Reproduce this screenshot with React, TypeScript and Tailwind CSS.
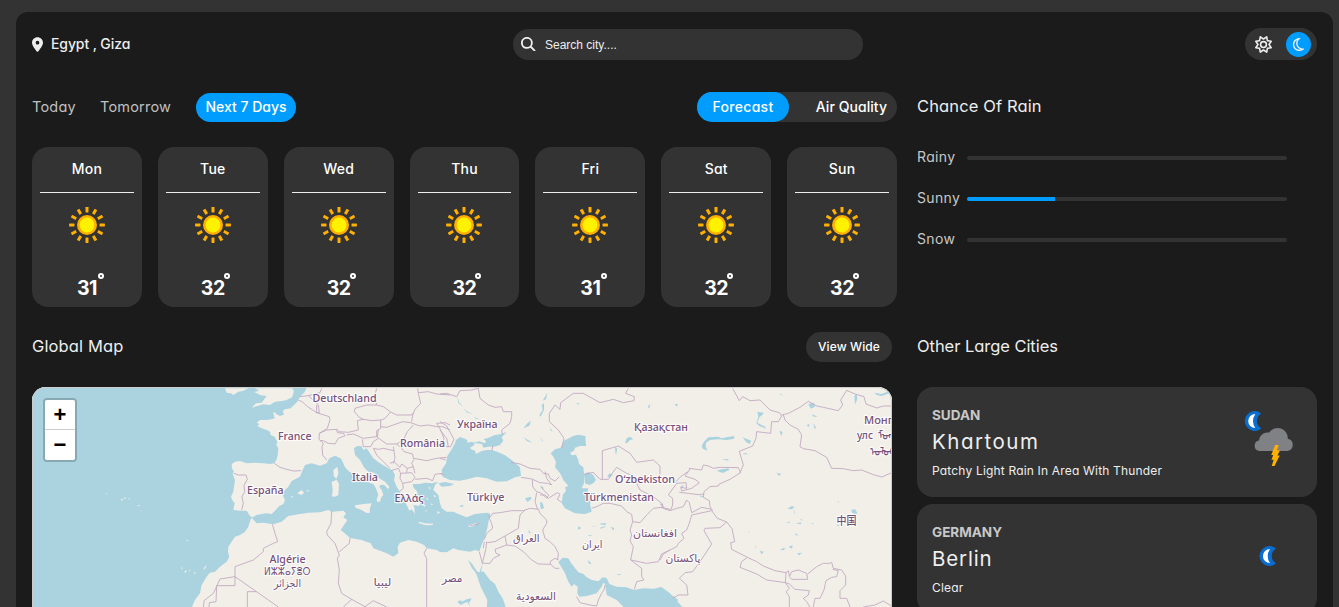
import { FaLocationDot, FaMagnifyingGlass, FaRegMoon, FaRegSun } from "react-icons/fa6";

const BODY = "font-['Inter',sans-serif] [font-feature-settings:'cv11']";

const days = [
  { day: "Mon", temp: 31 },
  { day: "Tue", temp: 32 },
  { day: "Wed", temp: 32 },
  { day: "Thu", temp: 32 },
  { day: "Fri", temp: 31 },
  { day: "Sat", temp: 32 },
  { day: "Sun", temp: 32 },
];

const chances = [
  { label: "Rainy", value: 0 },
  { label: "Sunny", value: 27.5 },
  { label: "Snow", value: 0 },
];

function SunIcon() {
  return (
    <svg viewBox="-18 -18 36 36" className="size-9">
      {Array.from({ length: 12 }, (_, i) => (
        <rect key={i} x="-1.5" y="-17.9" width="3" height="5.4" rx="0.4" fill="#ffb000" transform={`rotate(${i * 30})`} />
      ))}
      <circle r="10" fill="#ffae00" />
      <circle r="7.4" fill="#fff200" />
    </svg>
  );
}

function MoonShape() {
  return (
    <>
      <path d="M15.4 2.6A9.5 9.5 0 1 0 15.4 17.4 8.6 8.6 0 0 1 15.4 2.6Z" fill="#0a6ed1" stroke="#0a6ed1" strokeWidth="1" strokeLinejoin="round" />
      <path d="M10 2.9A7.1 7.1 0 0 0 10 17.1 13 13 0 0 1 10 2.9Z" fill="#fff" />
    </>
  );
}

function MoonIcon() {
  return (
    <svg viewBox="0 0 64 64" className="mb-[6px] size-16">
      <g transform="translate(23 22)">
        <MoonShape />
      </g>
    </svg>
  );
}

function ThunderIcon() {
  return (
    <svg viewBox="0 0 64 64" className="mb-[6px] size-16">
      <g transform="translate(8.3 4)">
        <MoonShape />
      </g>
      <path d="M22.4 44a5.3 5.3 0 0 1-.5-10.5 8.4 8.4 0 0 1 10.2-7.9 10.1 10.1 0 0 1 18.6 6.2 6.2 6.2 0 0 1-.3 12.2Z" transform="translate(.1 0)" fill="#808184" />
      <path d="M38.2 38h3.6l-2 5.3h3.1l-2.5 5.2h2.3l-5.2 10.4h-2.8l2-6.2h-2.3l1.9-4.8h-2.1Z" fill="#ffb000" />
    </svg>
  );
}

const SEAS_WEST = [
  // Atlantic
  "M-580 10H265L255 35 240 50 232 65 222 75 212 85 195 88 188 93 192 104 180 108 170 103 162 95 160 99 164 115 155 118 140 120 120 120 110 128 118 132 112 138 125 145 140 150 150 155 152 165 164 170 172 185 169 196 175 204 173 225 170 238 163 250 150 252 130 250 105 248 80 250 60 243 45 245 35 253 36 265 42 275 38 282 45 300 42 320 40 335 33 350 38 362 44 370 40 390 60 392 80 392 88 405 97 413 92 418 85 440 75 455 60 465 45 470 35 485 25 500 24 515 28 530 20 545 0 560-15 575-30 578-40 590-55 615-60 640-75 660-88 690H-580Z",
  // Mediterranean
  "M95 413 110 405 125 402 140 400 155 402 165 392 178 378 190 372 195 360 188 345 190 335 205 320 215 303 240 290 247 272 255 255 275 250 300 257 320 250 328 235 345 227 362 235 368 245 375 262 388 275 405 283 425 298 440 300 448 308 460 312 468 325 475 345 470 358 472 366 480 365 484 352 490 345 485 330 478 322 480 315 492 314 505 328 508 320 495 305 470 290 463 278 445 275 432 262 420 240 405 225 402 205 412 198 425 199 430 210 440 205 450 220 460 235 480 250 500 262 518 272 525 285 522 300 530 320 540 335 552 355 560 375 568 392 575 388 585 402 583 385 580 375 598 378 600 370 595 350 588 345 592 335 580 322 578 312 600 312 615 308 635 310 655 305 645 315 640 330 655 345 660 370 665 385 680 395 700 395 715 402 740 412 765 402 785 400 805 398 808 410 803 440 795 470 785 495 778 514 765 510 750 515 715 510 700 505 680 517 660 516 650 510 620 505 612 495 590 485 565 480 540 488 533 500 535 520 520 530 500 520 480 512 460 505 452 490 425 480 390 474 380 465 362 450 372 435 382 420 370 412 378 400 370 392 335 395 325 390 300 397 265 398 235 403 205 408 185 425 160 433 130 428 110 430Z",
];

const ISLANDS = [
  "M15 25H85L70 32 55 35 40 45 33 40 20 38Z",
  "M105 25H217L222 34 216 52 200 60 190 62 165 65 150 75 130 73 95 83 108 70 125 68 137 52 140 48 122 46 103 36 118 32Z",
  "M405 376 430 372 455 370 449 386 450 398 440 399 420 388 406 383Z",
  "M335 306 350 299 357 312 355 345 345 350 336 349 338 330Z",
  "M340 270 352 260 355 280 349 297 341 288Z",
  "M595 425 615 430 640 431 638 435 618 436 597 430Z",
  "M745 437 758 432 770 430 762 438 750 441Z",
  "M232 340 245 330 252 338 245 345Z",
  "M258 332 266 330 265 335Z",
  "M212 350 218 348 218 353Z",
  "M602 365 618 377 612 380ZM625 320 633 324 628 328ZM640 345 650 348 643 352ZM620 352 625 358 620 360ZM632 370 640 374 634 376ZM653 392 660 398 652 402ZM618 390 622 394 616 394Z",
  "M-300 358h10l-3 4ZM-290 354l8-2-3 5ZM-275 355l6 1-4 3ZM-248 375l12 1-10 2ZM-342 339h3v2h-3ZM-238 392h3v2h-3ZM-102 481l9-1-6 4Z",
  "M-116 560l4 5-3 4ZM-108 575l9-5-4 9ZM-95 572l9-4-6 6ZM-78 576l6 4-6 2ZM-50 572l4-12 6-5-4 10Z",
];

const SEAS_EAST = [
  // Black Sea and Azov
  "M48 180 60 171 75 176 82 180 82 188 96 185 105 190 100 197 90 203 94 208 105 212 108 222 125 213 140 210 155 210 175 217 195 226 215 240 240 262 243 288 225 292 200 304 170 305 140 295 110 290 85 297 60 302 30 300 8 290 5 270 18 250 22 228 35 208 45 190Z",
  "M100 188 118 184 135 190 138 183 130 178 150 172 162 166 180 163 200 156 185 172 190 182 180 195 162 200 145 200 130 203 126 192Z",
  "M-5 310 15 306 42 312 30 318 5 320Z",
  // Caspian
  "M372 182 400 168 415 164 436 168 438 198 420 198 405 203 402 212 390 219 395 226 408 224 415 240 417 252 430 262 432 280 432 310 425 325 445 325 443 335 456 352 450 372 455 395 435 402 405 400 375 385 365 370 368 345 378 332 375 322 385 318 370 300 360 280 345 262 348 245 340 230 332 220 345 208 362 203Z",
  "M432 283 445 276 460 285 468 300 460 310 448 315 435 310Z",
  // Persian Gulf and Gulf of Oman
  "M355 546 368 533 385 535 393 548 402 560 415 577 430 582 440 592 455 600 475 604 488 592 500 594 508 612 530 620 560 622 582 630 610 625 640 626 665 622 690 640 710 662 735 690H560L530 660 500 645 495 612 490 608 485 620 470 640 440 648 418 650 412 640 413 620 402 612 395 620 385 605 375 580Z",
  // Red Sea
  "M108 578 130 574 150 600 165 612 175 635 188 655 200 690H140L142 660 122 620Z",
  "M84 540 95 550 105 565 115 578 110 582 96 565ZM128 550 126 562 122 578 119 574Z",
];

const LAKES_EAST = [
  "M52 50 58 68 70 80 55 70ZM70 85 85 97 100 103 82 98ZM100 110 120 118 108 116Z",
  "M250 145 262 130 273 122 268 137ZM250 172 278 188 262 184ZM298 105 308 90 305 75 312 70 312 90 302 110ZM308 62 322 38 318 58Z",
  "M525 200 532 206 528 226 526 215ZM502 290 508 280 518 284 510 292Z",
  "M555 190 560 175 570 170 580 178 570 180 562 188Z",
  "M255 355 272 350 275 356 262 366ZM300 365 308 370 312 385 302 388ZM305 318 312 325 306 327Z",
  "M415 440h6v8h-8ZM482 430h16v4h-16ZM480 443l16-5v3l-15 5ZM510 440l12 4v8ZM445 465h10v2h-10ZM443 540l12 10-8 2ZM532 582h14l-12 4ZM450 440l15-3v2Z",
  "M52 665 62 660 65 665 80 658 95 655 90 665 75 668 62 675ZM85 660l5 18-6-8Z",
  "M265 450l8 8-6 2ZM623 80l8-8-3 14ZM408 70h8v4ZM300 170l10 15-4-2ZM330 140l8 15-5-3ZM57 378l14-4-4 8Z",
];

const LAKES_FAR = [
  "M125 197 132 185 145 172 175 170 185 175 200 172 222 168 223 176 200 180 175 178 150 180 138 188 137 198 142 212 128 206Z",
  "M170 272 185 268 205 265 208 270 188 279ZM185 238 205 238 205 242ZM248 172 262 178 273 182 270 192 258 186Z",
  "M292 95 310 98 310 102 298 112 292 128 315 140 318 146 298 138 289 130 295 110Z",
  "M445 72 462 68 465 80 452 86ZM455 102l18 8-12 0ZM358 152l10 4-4 12ZM460 130l8 12-4 6ZM440 135l10-3-5 10Z",
  "M583 48 590 42 592 56 585 74ZM643 38 665 42 695 30 692 38 665 48 650 45Z",
  "M573 390 585 388 592 398 588 404 578 400ZM350 278l14 4-8 6ZM533 363l6 4h-6Z",
  "M382 386l14-8 8 4-10 6ZM408 430l16-3-2 6ZM405 460l12 6h-10ZM385 500 398 496 396 506ZM410 520l16-2-8 8ZM360 510l10-6 8 2-10 5ZM300 512l12 3-8 8ZM375 430l15-5v3ZM452 430h8v3ZM400 385l5 14-2 2ZM285 497l4 5h-4ZM262 455h6v3ZM420 415l8 6h-5Z",
  "M44 72h10l-4 8ZM120 346l12 4-10 2ZM250 220h12v3h-12ZM62 318l10-2-6 8ZM358 40l12 6-8-2ZM528 434h12l-5 5Z",
  "M-3 620 20 633 25 645 40 648 55 660 50 665 70 690H-3Z",
];

const BORDERS_WEST =
  "M163 250 180 262 200 268 220 273 243 272M42 280 55 285 78 285 82 298 72 315 74 335 66 350 70 370 65 390" +
  "M235 60 248 66 260 78 290 98 328 110 330 120 322 145 298 160 297 178 310 190 306 200 308 225 320 240" +
  "M240 50 265 47 282 62 295 75 298 98 290 98 290 75M265 47 300 38 305 25" +
  "M298 160 320 150 350 148 352 158 370 160 375 167 355 175 345 192 325 190 310 182 300 182" +
  "M350 148 358 155 385 157 415 150 412 122 430 118 455 122 482 120 482 145 470 152 470 170 430 175 400 162 380 165" +
  "M430 118 418 112 403 95 405 85 440 75 470 75 490 80 512 96 495 115 480 122M470 75 465 45 470 25" +
  "M512 96 530 105 575 105 580 98M593 25 595 40 602 70 585 88 578 105 575 125M482 140 500 142 520 135 548 125 572 128 600 138 625 135 650 140 668 140 690 150" +
  "M595 38 625 35 650 42 690 45M475 150 472 172 500 192 530 192 550 180 562 155 580 135" +
  "M530 192 545 205 552 215 578 222 580 235 620 242 650 235 680 232M650 130 662 150 672 175 668 195M650 130 675 128 690 135" +
  "M427 178 430 200 452 200 460 185 475 175M460 205 475 208 490 205 522 212 525 235 520 250M460 205 470 225 490 245 510 265" +
  "M522 212 520 200M510 250 522 245 540 262 545 252 562 265 580 260 575 250 582 238M513 272 535 265 542 280 575 278 585 292 575 305 548 310 540 295 542 280" +
  "M562 265 560 278M580 260 585 280M585 298 620 295 638 302 645 283 668 280M548 310 550 325 538 335" +
  "M335 393 333 430 320 455 322 465 345 490 358 525M390 474 388 490 370 505 358 515M358 525 352 535 358 570 355 610 365 640 395 658 370 681M395 658 435 680 460 662 500 681" +
  "M620 505 612 520 620 535 620 681M157 433 165 460 173 485 160 490 130 505 130 515 100 540 45 560 45 617-10 617-12 665-32 668-33 690" +
  "M45 590 175 681M82 681V635H110M45 590 0 597-20 640-48 662-50 690";

const BORDERS_EAST =
  "M0 42 20 40 50 50 60 32 95 30 115 25 120 55 145 75 165 82 185 80 190 95 215 95 215 110 210 130 185 150 187 162" +
  "M0 125 20 138 42 178 32 200 18 200M0 150 20 175 25 200M0 235 18 240M0 280 10 285" +
  "M365 205 372 175 355 150 328 125 328 100 345 75 360 88 362 68 400 40 430 40 480 68 520 58 550 68 582 62 583 50 557 40 565 25" +
  "M213 247 240 252 270 265 300 268 310 280 325 282 330 295 345 303 358 290M243 292 275 297 300 308 322 310 335 315 320 295 315 275" +
  "M277 298 278 320 290 335 305 340 320 355 326 345 310 330 302 318M290 338 285 365 293 388M300 345 315 345 325 355 352 338 360 343 352 358 365 367" +
  "M150 412 158 400 180 398 215 392 250 392 270 385 295 388M295 388 300 400 320 420 320 430 308 450 315 475 330 485 345 500 355 520 353 540" +
  "M255 390 240 405 235 445 195 468 165 485 140 488M195 468 200 495 225 498 250 515 275 540 295 552 332 553M332 553 330 545 345 535 355 540M332 553 345 565 358 565" +
  "M200 495 165 508 168 520 180 525 160 535 150 550 128 550M148 400 148 415 155 430 158 445 140 460 133 478M140 485 138 505 132 530 127 550M118 515 127 550M133 485 130 505" +
  "M158 198 156 212M90 437 118 432M410 650 420 668 450 675 470 678 475 660 485 640 492 630 495 615" +
  "M455 385 470 380 490 370 510 370 545 378 560 395 575 403 578 425 570 450 575 465 570 482 580 500 572 540 605 565 605 590 612 600 590 605 583 628" +
  "M572 540 620 550 655 545 665 522 690 510M432 283 460 277 480 298 505 298 515 282 530 262 560 280 575 285 590 310 600 330 640 350 668 372 665 385" +
  "M578 425 600 428 620 405 640 385 665 382 690 388M487 298V212L535 198 570 220 590 247 640 240 660 258 660 285";

const BORDERS_FAR =
  "M218 25 238 62 248 50 270 62 300 60 330 90 358 98 365 108 355 125 335 125 332 160 290 155 288 175 278 198 238 214 250 255 240 278" +
  "M45 308 62 290 88 272 88 265 125 270 130 255 145 258 160 265 180 262 235 263 242 278 210 298 178 312 175 318 150 320 132 335 130 352 148 362 150 380 158 392" +
  "M85 275 75 288 105 298 118 308 95 325 65 333 62 322 80 325 78 308 50 310 25 345 38 355 38 375 32 390M58 337 85 340 115 344 132 342" +
  "M155 388 125 382 95 398 88 368 80 360 70 380 50 385 30 392 10 385 8 375 0 372M155 392 95 405 88 430 80 450 65 460 72 475 55 490 50 500 30 510 10 522 0 540" +
  "M155 392 172 415 200 426 180 443 135 445 132 452 155 492 140 515 120 545 98 575 75 578 58 595 80 615 84 645 55 645 38 655" +
  "M200 426 216 446 224 485 212 488 215 508 262 532 290 545 310 558 345 572 378 578 376 608 320 600 290 582 240 562 245 545 262 532" +
  "M388 590 395 575 415 570 440 580 443 598 395 598ZM378 578 385 572 388 588M376 608 388 612 405 628 448 632 445 645 430 655 440 665 450 681M376 608 388 625 378 635 388 650 388 681" +
  "M443 582 470 560 490 550 510 550 515 547 520 565 545 570 557 588 557 615 540 632 540 655 560 655 570 681M518 568 535 572 530 590 515 592 498 602 492 630 480 655 465 655 460 681" +
  "M365 105 385 100 420 82 445 64 470 78 490 82 535 92 548 75 542 60 560 31 585 42 612 50 618 72 650 84 670 78 698 78" +
  "M370 105 375 120 390 135 415 148 425 165 420 200 430 206 465 212 500 232 515 265 550 266 580 272 605 270 640 284 665 291 698 277M610 681 645 675 670 663 698 680";

const labels: { t: string; x: number; y: number; w: number }[] = [
  { t: "Deutschland", x: 312.5, y: 402, w: 64 },
  { t: "France", x: 278, y: 440, w: 33.5 },
  { t: "España", x: 247, y: 494, w: 36.5 },
  { t: "Italia", x: 352, y: 480.5, w: 26 },
  { t: "Ελλάς", x: 394.5, y: 502, w: 29 },
  { t: "România", x: 400, y: 447, w: 45 },
  { t: "Україна", x: 457, y: 427.5, w: 40.5 },
  { t: "Türkiye", x: 467, y: 500.5, w: 37.5 },
  { t: "Қазақстан", x: 634, y: 430.5, w: 54 },
  { t: "Oʻzbekiston", x: 615, y: 483, w: 60 },
  { t: "Türkmenistan", x: 584, y: 501, w: 70 },
  { t: "العراق", x: 513, y: 542, w: 26.5 },
  { t: "ایران", x: 582, y: 548, w: 20.5 },
  { t: "السعودية", x: 516, y: 600, w: 40 },
  { t: "مصر", x: 442, y: 582, w: 20.5 },
  { t: "ليبيا", x: 373.5, y: 586, w: 18 },
  { t: "Algérie", x: 269.5, y: 563, w: 36 },
  { t: "ⵍⵣⵣⴰⵢⴻⵔ", x: 264, y: 575, w: 46.5 },
  { t: "الجزائر", x: 274, y: 587, w: 27 },
  { t: "افغانستان", x: 633, y: 537, w: 44 },
  { t: "پاکستان", x: 665.5, y: 561.5, w: 35 },
  { t: "中国", x: 836.5, y: 525, w: 20 },
  { t: "Монгол", x: 864, y: 423.5, w: 42 },
  { t: "улс", x: 857, y: 439, w: 16 },
  { t: "ᠮᠣᠩᠭᠣᠯ", x: 877.5, y: 439, w: 34 },
  { t: "ᠤᠯᠤᠰ", x: 870, y: 454.5, w: 28 },
];

function Shapes({ x, paths, fill }: { x: number; paths: string[]; fill: string }) {
  return (
    <g transform={`translate(${x} 380) scale(.33333)`} fill={fill}>
      {paths.map((d) => (
        <path key={d} d={d} />
      ))}
    </g>
  );
}

function Borders({ x, d }: { x: number; d: string }) {
  return (
    <g transform={`translate(${x} 380) scale(.33333)`}>
      <path d={d} fill="none" stroke="#c2aac2" strokeWidth="2.7" strokeLinejoin="round" />
    </g>
  );
}

function WorldMap() {
  return (
    <svg viewBox="32 387 860 220" className="block h-[220px] w-[860px] bg-[#f2efe9]">
      <Shapes x={220} paths={SEAS_WEST} fill="#aad3df" />
      <Shapes x={440} paths={SEAS_EAST} fill="#aad3df" />
      <Shapes x={440} paths={LAKES_EAST} fill="#aad3df" />
      <Shapes x={660} paths={LAKES_FAR} fill="#aad3df" />
      <Shapes x={220} paths={ISLANDS} fill="#f2efe9" />
      <Borders x={220} d={BORDERS_WEST} />
      <Borders x={440} d={BORDERS_EAST} />
      <Borders x={660} d={BORDERS_FAR} />
      <g
        className="font-['Noto_Sans','DejaVu_Sans','Noto_Sans_CJK_SC',sans-serif] text-[11px] font-medium"
        fill="#75507b"
        stroke="#ffffff"
        strokeOpacity="0.8"
        strokeWidth="2.4"
        strokeLinejoin="round"
        paintOrder="stroke"
      >
        {labels.map((l) => (
          <text key={l.t} x={l.x} y={l.y} textLength={l.w} lengthAdjust="spacingAndGlyphs">
            {l.t}
          </text>
        ))}
      </g>
    </svg>
  );
}

function DayCard({ day, temp }: { day: string; temp: number }) {
  return (
    <div className="flex h-40 w-[109.8px] flex-col items-center rounded-[16px] bg-[#333] px-2 text-white">
      <div className="flex h-[46px] w-full items-center justify-center border-b border-[#eee] pb-[3px] text-[14px] font-medium tracking-[0.2px]">
        {day}
      </div>
      <div className="mt-[14px]">
        <SunIcon />
      </div>
      <div className="relative mt-[30px] w-full text-center text-[19.5px] leading-[30px] font-bold tracking-[-0.5px]">
        {temp}
        <span className="absolute top-0 left-1/2 ml-[11px] size-[6px] rounded-full border-2 border-white" />
      </div>
    </div>
  );
}

function CityCard({
  country,
  city,
  text,
  cityClass,
  icon,
}: {
  country: string;
  city: string;
  text: string;
  cityClass: string;
  icon: React.ReactNode;
}) {
  return (
    <div className="flex h-[110px] w-[400px] items-center justify-between rounded-[16px] bg-[#333] pr-4 pl-[15px]">
      <div className="flex flex-col pt-[1px]">
        <div className="text-[13.5px] leading-5 font-bold text-[#c8c8c8]">{country}</div>
        <div className={`mt-[2px] text-[20.5px] leading-[30px] text-[#eee] ${cityClass}`}>{city}</div>
        <div className="mt-[5px] text-[12px] leading-[18px] tracking-[0.18px] text-[#eee]">{text}</div>
      </div>
      {icon}
    </div>
  );
}

export default function App() {
  return (
    <div className={`h-[607px] overflow-hidden bg-[#333] pt-3 pl-4 ${BODY}`}>
      <main className="h-[620px] w-[1317px] rounded-[12px] bg-[#1b1b1b] px-4 pt-4">
        <header className="flex h-8 items-center justify-between">
          <div className="flex w-[481px] items-center text-[14px] font-medium tracking-[-0.1px] text-[#eee]">
            <FaLocationDot className="mr-2 h-[15px] w-[11px]" />
            <span className="pb-[2px]">Egypt , Giza</span>
          </div>
          <label className="mt-[1px] flex h-[31px] w-[350px] items-center rounded-full bg-[#333] pl-2">
            <FaMagnifyingGlass className="mb-[1px] size-[14.5px] text-[#eee]" />
            <span className="pl-[9.5px] font-['Liberation_Sans',sans-serif] text-[12px] text-[#eee]">Search city....</span>
          </label>
          <div className="ml-auto flex h-8 w-[72px] items-center justify-between rounded-full bg-[#333] pr-[6px] pl-[10px] text-[#eee]">
            <FaRegSun className="size-[17px]" />
            <span className="mt-[1px] flex size-[25px] items-center justify-center rounded-full bg-[#009dff]">
              <FaRegMoon className="mb-[1px] size-[15px]" />
            </span>
          </div>
        </header>

        <div className="mt-8 flex gap-5">
          <section className="w-[865px]">
            <div className="flex h-[30px] items-center justify-between text-[14px]">
              <nav className="flex items-center text-[#c0c0c0]">
                <span className="w-[68px] pb-[1px] text-[14.5px] tracking-[0.2px]">Today</span>
                <span className="w-24 pb-[1px] text-[14.5px] tracking-[0.2px]">Tomorrow</span>
                <span className="mt-[1px] flex h-[29px] w-[100px] items-center justify-center rounded-full bg-[#009dff] pb-[2px] font-medium text-white">
                  Next 7 Days
                </span>
              </nav>
              <div className="flex h-[30px] w-[200px] items-center justify-between rounded-full bg-[#333] pr-[10px] font-medium text-white">
                <span className="flex h-[30px] w-[92px] items-center justify-center rounded-full bg-[#009dff] pb-[2px] tracking-[0.3px]">
                  Forecast
                </span>
                <span className="pb-[2px] tracking-[0.05px]">Air Quality</span>
              </div>
            </div>
            <div className="mt-[25px] flex justify-between">
              {days.map((d) => (
                <DayCard key={d.day} {...d} />
              ))}
            </div>
          </section>

          <section className="w-[400px] pt-[2px] text-[#eee]">
            <h2 className="text-[16.5px] leading-6 tracking-[0.12px]">Chance Of Rain</h2>
            <div className="mt-[28px] flex flex-col gap-5 text-[14px] leading-[21px] text-[#c8c8c8]">
              {chances.map((c) => (
                <div key={c.label} className="flex items-center">
                  <span className="w-[50px] tracking-[0.35px]">{c.label}</span>
                  <div className="mt-[2px] h-1 w-80 overflow-hidden rounded-full bg-[#333]">
                    <div className="h-full bg-[#009dff]" style={{ width: `${c.value}%` }} />
                  </div>
                </div>
              ))}
            </div>
          </section>
        </div>

        <div className="mt-[25px] flex gap-[25px]">
          <section className="w-[860px]">
            <div className="flex h-[30px] items-center justify-between text-[#eee]">
              <h2 className="pb-[2px] text-[16.5px] tracking-[0.12px]">Global Map</h2>
              <button className="h-[30px] w-[86px] rounded-full bg-[#333] text-[12px] font-medium tracking-[0.1px] whitespace-nowrap text-white">
                View Wide
              </button>
            </div>
            <div className="relative mt-[25px] h-[240px] overflow-hidden rounded-t-[14px] bg-[#f2efe9]">
              <WorldMap />
              <div className="pointer-events-none absolute inset-0 rounded-t-[14px] border border-[#ccc]" />
              <div className="absolute top-[11px] left-[11px] flex w-[34px] flex-col rounded-[4px] border-2 border-black/20 bg-clip-padding font-['Liberation_Sans',sans-serif] text-[22px] leading-[30px] font-bold text-black">
                <button className="h-[30px] rounded-t-[2px] border-b border-[#ccc] bg-white leading-[30px]">+</button>
                <button className="h-[30px] rounded-b-[2px] bg-white leading-[30px]">−</button>
              </div>
            </div>
          </section>

          <section className="w-[400px]">
            <div className="flex h-[30px] items-center">
              <h2 className="pb-[2px] text-[16.5px] tracking-[-0.05px] text-[#eee]">Other Large Cities</h2>
            </div>
            <div className="mt-[25px] flex flex-col gap-[7px]">
              <CityCard
                country="SUDAN"
                city="Khartoum"
                cityClass="tracking-[1.5px]"
                text="Patchy Light Rain In Area With Thunder"
                icon={<ThunderIcon />}
              />
              <CityCard country="GERMANY" city="Berlin" cityClass="tracking-[0.85px]" text="Clear" icon={<MoonIcon />} />
            </div>
          </section>
        </div>
      </main>
    </div>
  );
}
